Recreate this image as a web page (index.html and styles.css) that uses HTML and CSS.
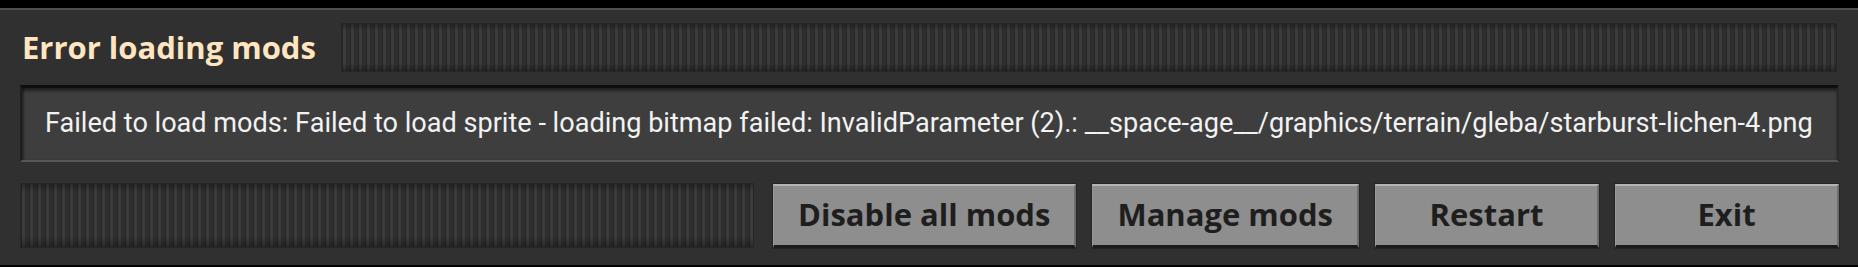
FILE: index.html
```html
<!DOCTYPE html>
<html>
<head>
<meta charset="utf-8">
<link rel="stylesheet" href="styles.css">
</head>
<body>
<div class="frame">
  <div class="titlebar">
    <h1 class="title">Error loading mods</h1>
    <div class="drag drag-top"></div>
  </div>
  <div class="message">Failed to load mods: Failed to load sprite - loading bitmap failed: InvalidParameter (2).: __space-age__/graphics/terrain/gleba/starburst-lichen-4.png</div>
  <div class="actions">
    <div class="drag drag-bottom"></div>
    <button class="btn">Disable all mods</button>
    <button class="btn">Manage mods</button>
    <button class="btn btn-fixed">Restart</button>
    <button class="btn btn-fixed">Exit</button>
  </div>
</div>
</body>
</html>
```
FILE: styles.css
```css
html, body {
  margin: 0;
  padding: 0;
  background: #000;
}
.frame {
  margin-top: 8px;
  border-top: 2px solid #524e4e;
  background: #313031;
  height: 257px;
  box-sizing: border-box;
  padding: 13px 19px 0 20px;
}
.titlebar {
  display: flex;
  align-items: center;
  height: 49px;
  gap: 25px;
}
.title {
  margin: 0;
  padding-left: 2px;
  font-family: "Open Sans", Lato, sans-serif;
  font-weight: 700;
  font-size: 31px;
  line-height: 1;
  color: #ffe6c0;
  white-space: nowrap;
}
.drag {
  flex: 1;
  align-self: stretch;
  border: 1px solid #2b2524;
  background:
    linear-gradient(to bottom, rgba(0,0,0,0.28), rgba(0,0,0,0) 14%, rgba(0,0,0,0) 84%, rgba(0,0,0,0.32)),
    repeating-linear-gradient(90deg, #262626 0 1px, #3c3c3c 1px 4px, #2c2c2c 4px 5px, #2f2f2f 5px 8px);
}
.drag-top {
  margin-right: 2px;
}
.message {
  margin-top: 13px;
  height: 77px;
  box-sizing: border-box;
  background: #3e3e3e;
  border-top: 3px solid #0e0e0e;
  border-left: 2px solid #1e1e1e;
  border-right: 2px solid #2a2a2a;
  border-bottom: 2px solid #575757;
  box-shadow: inset 0 3px 3px rgba(0,0,0,0.45), inset 2px 0 2px rgba(0,0,0,0.3);
  display: flex;
  align-items: center;
  padding: 0 0 2px 23px;
  font-family: Roboto, "Open Sans", sans-serif;
  font-size: 27.1px;
  color: #f2f2f2;
  white-space: nowrap;
  overflow: hidden;
}
.actions {
  margin-top: 21px;
  height: 65px;
  display: flex;
  gap: 16px;
}
.drag-bottom {
  margin-right: 3px;
}
.btn {
  height: 64px;
  margin-top: 1px;
  box-sizing: border-box;
  padding: 0 24px 2px;
  background: #8e8e8e;
  border: none;
  border-top: 2px solid #b3b3b3;
  border-left: 1px solid #9a9a9a;
  border-right: 2px solid #6e6e6e;
  border-bottom: 3px solid #1b1b1b;
  box-shadow: 0 0 0 1px #262424;
  font-family: "Open Sans", Lato, sans-serif;
  font-weight: 700;
  font-size: 31px;
  line-height: 1;
  color: #1e1e1e;
  white-space: nowrap;
}
.btn-fixed {
  width: 224px;
}
```
